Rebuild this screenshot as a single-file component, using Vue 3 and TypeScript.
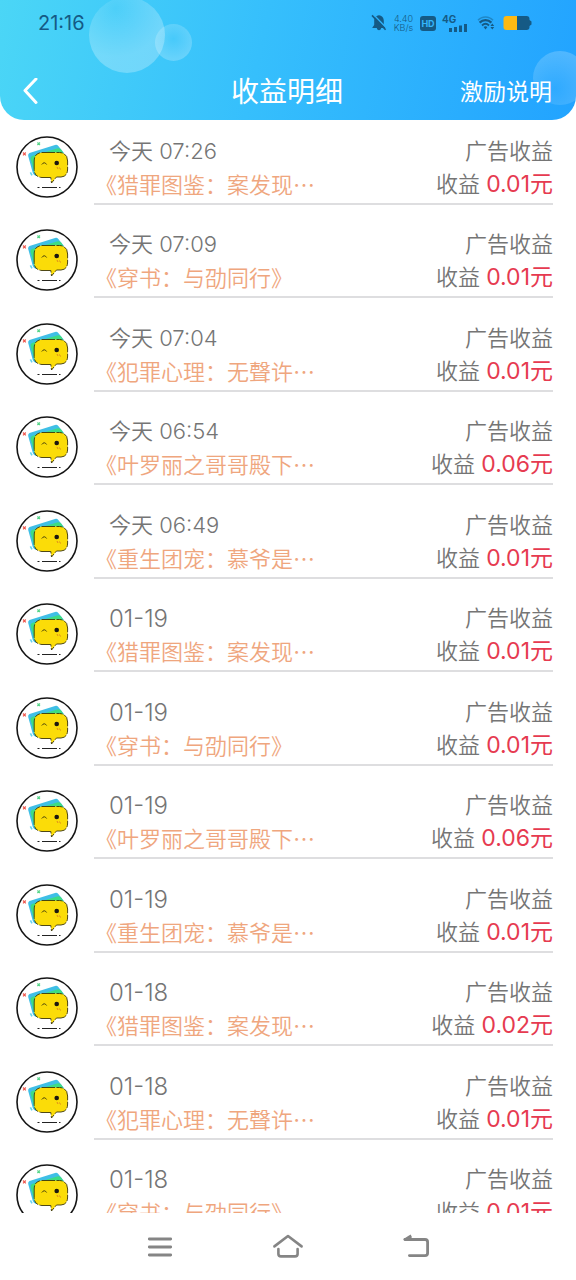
<script setup lang="ts">
interface Earning {
  date: string
  title: string
  amount: string
}

const earnings: Earning[] = [
  { date: '今天 07:26', title: '《猎罪图鉴：案发现…', amount: '0.01' },
  { date: '今天 07:09', title: '《穿书：与劭同行》', amount: '0.01' },
  { date: '今天 07:04', title: '《犯罪心理：无聲许…', amount: '0.01' },
  { date: '今天 06:54', title: '《叶罗丽之哥哥殿下…', amount: '0.06' },
  { date: '今天 06:49', title: '《重生团宠：慕爷是…', amount: '0.01' },
  { date: '01-19', title: '《猎罪图鉴：案发现…', amount: '0.01' },
  { date: '01-19', title: '《穿书：与劭同行》', amount: '0.01' },
  { date: '01-19', title: '《叶罗丽之哥哥殿下…', amount: '0.06' },
  { date: '01-19', title: '《重生团宠：慕爷是…', amount: '0.01' },
  { date: '01-18', title: '《猎罪图鉴：案发现…', amount: '0.02' },
  { date: '01-18', title: '《犯罪心理：无聲许…', amount: '0.01' },
  { date: '01-18', title: '《穿书：与劭同行》', amount: '0.01' },
]
</script>

<template>
  <div class="screen" lang="zh-CN">
    <header class="header">
      <span class="bubble bubble-large"></span>
      <span class="bubble bubble-small"></span>
      <span class="bubble bubble-edge"></span>

      <div class="status">
        <span class="clock">21:16</span>
        <div class="indicators">
          <svg width="16" height="18" viewBox="0 0 16 18" aria-hidden="true">
            <path d="M8 1.2 C11.4 1.6 12.8 4 12.8 7 V11 L14.6 13.4 V14 H1.4 V13.4 L3.2 11 V7 C3.2 4 4.6 1.6 8 1.2Z" fill="currentColor" />
            <path d="M5.8 14 H10.2 C9.6 17 6.4 17 5.8 14Z" fill="currentColor" />
            <path d="M2.4 0.6 L16 14.6" stroke="#2eb4fe" stroke-width="1.4" />
            <path d="M1 1.4 L14.6 15.8" stroke="currentColor" stroke-width="1.6" />
          </svg>
          <span class="speed"><span>4.40</span><span>KB/s</span></span>
          <span class="hd">HD</span>
          <span class="cell">
            <span class="gen">4G</span>
            <svg width="20" height="9" viewBox="0 0 20 9" aria-hidden="true">
              <path d="M1 5 H4 V9 H1Z M6 4 H9 V9 H6Z M11 2.5 H14 V9 H11Z M16 1 H19 V9 H16Z" fill="currentColor" />
            </svg>
          </span>
          <svg class="wifi" width="18" height="16" viewBox="0 0 18 16" aria-hidden="true">
            <g fill="none" stroke="currentColor">
              <path d="M1 5.2 C5 0.8 12 0.8 16 5.2" stroke-width="1.5" opacity="0.45" />
              <path d="M2.6 7.6 C6 4.2 11 4.2 14.4 7.6" stroke-width="2.2" />
              <path d="M5 10.4 C7.2 8.4 9.8 8.4 12 10.4" stroke-width="2" />
            </g>
            <path d="M6.6 12 Q8.5 10.6 10.4 12 L8.5 14.4Z" fill="currentColor" />
            <path d="M15.3 8.4 L17.2 11 H13.4Z M15.3 14.6 L17.2 12 H13.4Z" fill="currentColor" />
          </svg>
          <svg width="29" height="16" viewBox="0 0 29 16" aria-hidden="true">
            <path d="M14 1 H23.5 Q26.5 1 26.5 4 V5 L28.5 6.5 V9.5 L26.5 11 V12 Q26.5 15 23.5 15 H14Z" fill="#155a85" />
            <path d="M14 1 H3.5 Q0.5 1 0.5 4 V12 Q0.5 15 3.5 15 H14Z" fill="#fdb913" />
          </svg>
        </div>
      </div>

      <div class="titlebar">
        <button class="back" type="button" aria-label="返回">
          <svg width="16" height="28" viewBox="0 0 16 28" aria-hidden="true">
            <path d="M14 1 L3 12.5 L14 24.5" fill="none" stroke="#fff" stroke-width="3" stroke-linecap="round" stroke-linejoin="round" />
          </svg>
        </button>
        <h1 class="title">收益明细</h1>
        <a class="rules" href="#rules">激励说明</a>
      </div>
    </header>

    <main class="content">
      <ul class="list">
        <li v-for="(item, i) in earnings" :key="i" class="row">
          <svg class="avatar" width="62" height="62" viewBox="0 0 62 62" aria-hidden="true">
            <circle cx="31" cy="31" r="30" fill="#fff" stroke="#151515" stroke-width="1.6" />
            <path d="M13.5 17 L39 9 Q41 8.4 42.3 10 L48 17 L20 40 Q17.5 39 16.8 37 L12.2 20 Q11.8 17.8 13.5 17Z" fill="#3fbfe6" />
            <path d="M16 20 L41 12.5 Q44 11.6 45.6 14 L48 19 L22 40 Q19 38 18.4 36 L14.6 23 Q14.2 20.8 16 20Z" fill="#3ddc84" />
            <path
              d="M26 16.5 H43.5 Q51.6 17 51.6 25 V33 Q51.6 40.6 45 41 H40.5 L35.5 47 L34.8 41.5 H26 Q18.2 41 18.2 33.5 V25 Q18.2 17 26 16.5Z"
              fill="#fbdc08" stroke="#3b3609" stroke-width="0.9" stroke-dasharray="13 1.5 6 1.5"
            />
            <path d="M25.8 28.5 Q28.3 25 30.6 28.5" fill="none" stroke="#4a430c" stroke-width="1" />
            <circle cx="40.7" cy="27" r="2.3" fill="#1b1710" />
            <path d="M41 31 L42 33 M43.5 31.5 L44.5 33.5" stroke="#e08a1c" stroke-width="1" />
            <path d="M7 16.5 L9.8 19.3 M9.8 16.5 L7 19.3" stroke="#ee5a50" stroke-width="1.2" />
            <path d="M21.4 6.5 L24 9 M24 6.5 L21.4 9" stroke="#58d68a" stroke-width="1.2" />
            <path d="M14.4 36.4 L16 39.4" stroke="#67d5ee" stroke-width="1.6" />
            <path d="M21.5 51.5 H23.5 M26 51.5 H41 M43 51.5 H44.5" stroke="#222" stroke-width="1" />
          </svg>
          <div class="body">
            <div class="line">
              <span class="date" :class="{ day: !item.date.includes(':') }">{{ item.date }}</span>
              <span>广告收益</span>
            </div>
            <div class="line">
              <span class="book">{{ item.title }}</span>
              <span>收益 <strong class="amount">{{ item.amount }}元</strong></span>
            </div>
          </div>
        </li>
      </ul>
    </main>

    <nav class="nav">
      <button type="button" aria-label="最近任务">
        <svg width="26" height="22" viewBox="0 0 26 22" aria-hidden="true">
          <path d="M2.3 3 H23.7 M2.3 11 H23.7 M2.3 19 H23.7" stroke="currentColor" stroke-width="2.8" stroke-linecap="round" />
        </svg>
      </button>
      <button type="button" aria-label="主屏幕">
        <svg width="32" height="26" viewBox="0 0 32 26" aria-hidden="true">
          <g fill="none" stroke="currentColor" stroke-width="2.6" stroke-linecap="round" stroke-linejoin="round">
            <path d="M2.4 12.4 L16 2 L29.6 12.4" />
            <path d="M6.4 15 V20 Q6.4 22.4 9 22.4 H23 Q25.6 22.4 25.6 20 V15" />
          </g>
        </svg>
      </button>
      <button type="button" aria-label="返回上一级">
        <svg width="28" height="26" viewBox="0 0 28 26" aria-hidden="true">
          <path d="M3 5.5 H23 Q25.6 5.5 25.6 8 V19 Q25.6 21.6 23 21.6 H7.4" fill="none" stroke="currentColor" stroke-width="2.8" stroke-linecap="round" />
          <path d="M1.4 5 L8.6 0.6 L9.6 2.4 V6.4 H2Z" fill="currentColor" />
        </svg>
      </button>
    </nav>
  </div>
</template>

<style>
body {
  margin: 0;
  background: #fff;
}
</style>

<style scoped>
.screen {
  display: flex;
  flex-direction: column;
  height: 100vh;
  background: #fff;
  color: #757575;
  font-family: Inter, "Noto Sans CJK SC", sans-serif;
  font-size: 22px;
  font-weight: 350;
}

button {
  display: flex;
  align-items: center;
  justify-content: center;
  padding: 0;
  border: 0;
  background: none;
  color: inherit;
  cursor: pointer;
}

.header {
  position: relative;
  flex: none;
  overflow: hidden;
  border-radius: 0 0 24px 24px;
  background: linear-gradient(102deg, #4bd6f6 0%, #36bffc 45%, #22a3ff 100%);
}

.bubble {
  position: absolute;
  border-radius: 50%;
}

.bubble-large {
  top: -3px;
  left: 89px;
  width: 76px;
  height: 76px;
  background: radial-gradient(circle at 35% 15%, rgba(255, 255, 255, 0.06), rgba(255, 255, 255, 0.26) 60%);
}

.bubble-small {
  top: 24px;
  left: 155px;
  width: 37px;
  height: 37px;
  background: radial-gradient(circle at 50% 40%, rgba(255, 255, 255, 0.05), rgba(255, 255, 255, 0.22) 70%);
}

.bubble-edge {
  top: 51px;
  right: -11px;
  width: 54px;
  height: 54px;
  background: radial-gradient(circle at 40% 70%, rgba(255, 255, 255, 0.05), rgba(255, 255, 255, 0.2) 75%);
}

.status {
  position: relative;
  display: flex;
  align-items: center;
  justify-content: space-between;
  height: 46px;
  padding: 0 44px 0 38px;
  color: #155a85;
}

.clock {
  font-size: 20px;
  font-weight: 400;
}

.indicators {
  display: flex;
  align-items: center;
  gap: 6px;
}

.speed {
  display: flex;
  flex-direction: column;
  align-items: center;
  width: 21px;
  font-size: 9px;
  line-height: 9px;
}

.hd {
  width: 16px;
  border-radius: 3px;
  background: #155a85;
  color: #35b6fb;
  font-size: 9px;
  font-weight: 700;
  line-height: 15px;
  text-align: center;
}

.cell {
  display: flex;
  flex-direction: column;
  width: 26px;
}

.cell svg {
  align-self: flex-end;
}

.gen {
  font-size: 10px;
  font-weight: 700;
  line-height: 8px;
}

.wifi {
  margin: 0 2px 0 3px;
}

.titlebar {
  position: relative;
  display: grid;
  grid-template-columns: 1fr auto 1fr;
  align-items: center;
  height: 74px;
  padding: 18px 24px 0 22px;
  box-sizing: border-box;
  color: #fff;
}

.back {
  justify-self: start;
}

.title {
  margin: 0;
  font-size: 28px;
  font-weight: 400;
  line-height: 40px;
}

.rules {
  justify-self: end;
  color: #fff;
  font-size: 23px;
  font-weight: 400;
  line-height: 40px;
  text-decoration: none;
}

.content {
  flex: 1;
  min-height: 0;
  overflow: hidden;
}

.list {
  margin: 0;
  padding: 0;
  list-style: none;
}

.row {
  display: flex;
  gap: 16px;
  margin-bottom: 8px;
  padding: 0 23px 0 16px;
}

.row:nth-child(even) {
  margin-bottom: 9px;
}

.avatar {
  flex: none;
  margin-top: 16px;
}

.body {
  flex: 1;
  min-width: 0;
  padding: 15px 0 2px;
  border-bottom: 2px solid #dedee0;
}

.line {
  display: flex;
  justify-content: space-between;
  height: 33px;
  line-height: 33px;
  white-space: nowrap;
}

.date {
  padding-left: 15px;
}

.day {
  font-size: 24px;
}

.book {
  padding-left: 1px;
  color: #efa67e;
  font-family: "Noto Sans CJK SC", sans-serif;
  line-height: 30px;
}

.amount {
  color: #e63a50;
  font-size: 23px;
  font-weight: 400;
}

.nav {
  display: grid;
  flex: none;
  grid-template-columns: repeat(3, 1fr);
  height: 67px;
  padding: 0 96px;
  color: #858585;
}
</style>
